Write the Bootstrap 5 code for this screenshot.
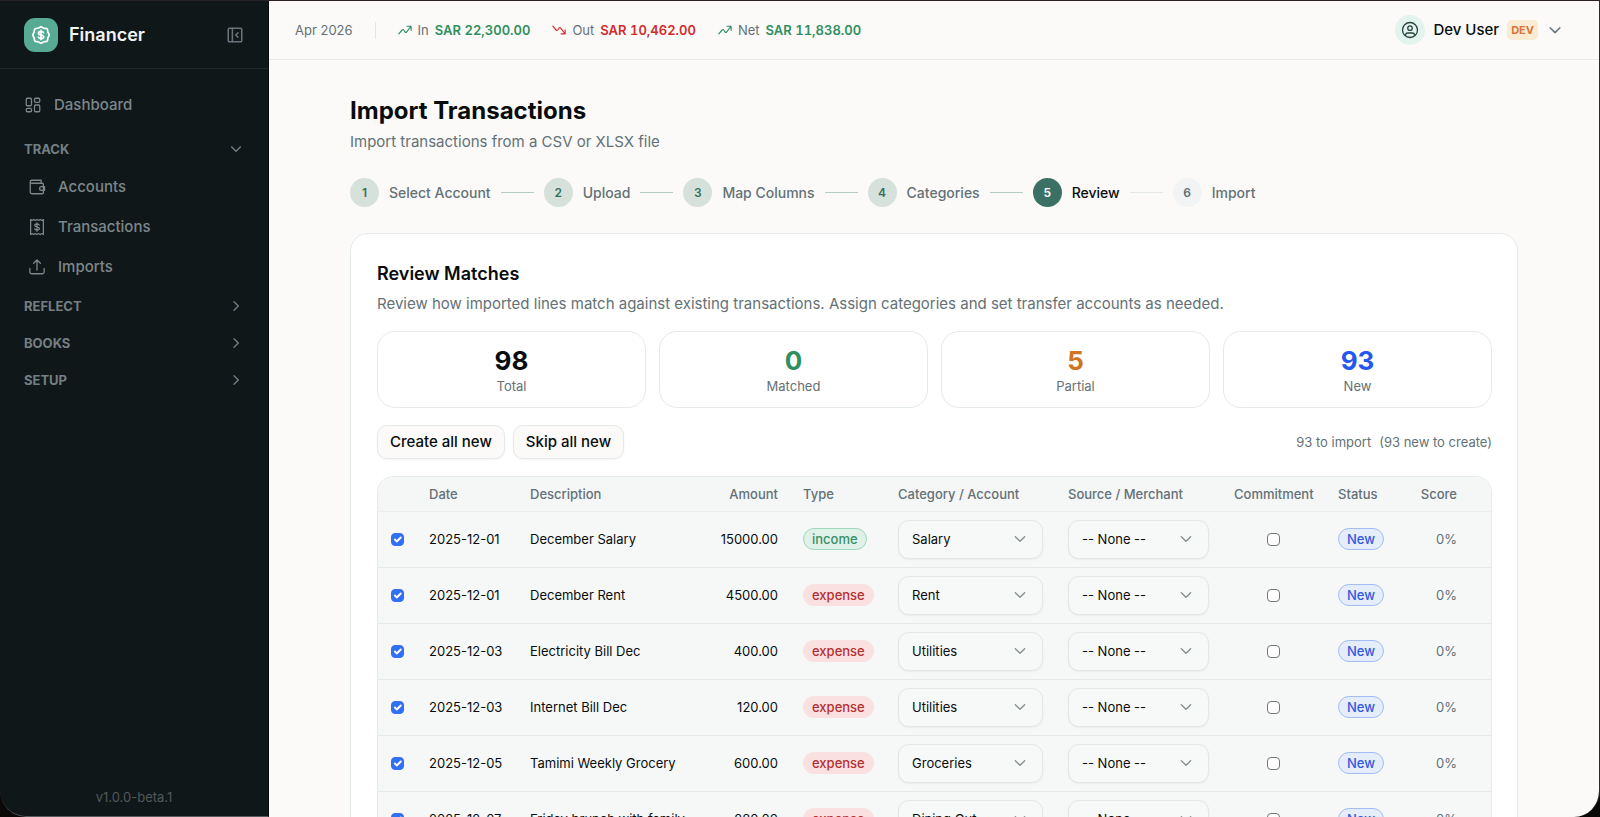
<!DOCTYPE html>
<html lang="en">
<head>
<meta charset="utf-8">
<meta name="viewport" content="width=device-width, initial-scale=1">
<title>Import Transactions - Financer</title>
<link href="https://cdn.jsdelivr.net/npm/bootstrap@5.3.0/dist/css/bootstrap.min.css" rel="stylesheet">
<style>
  :root { --muted: #647176; --line: #e4e9e9; --ink: #090c0d; --paper: #fbfaf8; --side: #101718; }
  body { font-family: Inter, "Liberation Sans", sans-serif; font-size: 15px; line-height: 20px; color: var(--ink); background: #0b0808; }
  svg { fill: none; stroke: currentColor; stroke-width: 2; stroke-linecap: round; stroke-linejoin: round; flex: none; }
  a { color: inherit; text-decoration: none; }
  .i14 { width: 14px; height: 14px; }
  .i16 { width: 16px; height: 16px; }
  .i18 { width: 18px; height: 18px; }
  .i20 { width: 20px; height: 20px; }
  .muted { color: var(--muted); }
  .green { color: #2f8f60; }
  .red { color: #d32a2c; }
  .orange { color: #cf7420; }
  .blue { color: #2558ee; }
  .t13 { font-size: 13px; }

  .shell { border-top: 1px solid #2a2224; border-right: 1px solid #2b2b2b; border-radius: 0 0 26px 26px; overflow: hidden; }
  .sidebar { width: 269px; background: var(--side); color: #7c878b; border: 1px solid #090d0e; border-width: 0 1px 1px 0; border-bottom-color: #565b5d; border-bottom-left-radius: 26px; }
  .brand-row { height: 68px; gap: 11px; padding: 0 24px; border-bottom: 1px solid #22292b; }
  .logo { width: 34px; height: 34px; border-radius: 11px; background: #57ab95; color: #fff; }
  .brand-name { font-size: 18px; color: #f1f4f4; }
  .side-link { height: 40px; padding: 0 24px; font-weight: 500; }
  .sub-link { padding-left: 28px; }
  .side-link svg { stroke-width: 1.7; }
  .side-group { height: 37px; padding: 0 24px; font-size: 13px; font-weight: 700; color: #747f84; background: none; border: 0; }
  .first-group { margin-top: 5px; }
  .icon-btn { background: none; border: 0; padding: 0; color: #69757a; }
  .version { color: #50595c; padding-bottom: 9px; }

  .main-col { background: var(--paper); min-width: 0; }
  .topbar { height: 59px; padding: 0 35px 0 26px; border-bottom: 1px solid #e8e9e8; }
  .vline { width: 1px; height: 17px; background: #e2e6e6; }
  .flow { gap: 22px; }
  .trend { gap: 6px; font-variant-numeric: tabular-nums; }
  .avatar { width: 30px; height: 30px; background: #e3f3ee; color: #24443d; }
  .avatar svg { stroke-width: 1.7; }
  .user-name { font-weight: 500; color: var(--ink); }
  .dev-tag { font-size: 11px; line-height: 20px; font-weight: 700; padding: 0 4px; border-radius: 5px; background: #faebd3; color: #d8763a; }

  .scroll-area { overflow: auto; scrollbar-width: none; }
  .scroll-area::-webkit-scrollbar { display: none; }
  .page { max-width: 1216px; padding: 34px 24px; margin: 0 auto; }
  h1 { font-size: 24px; line-height: 34px; font-weight: 700; margin: 0; }
  h2 { font-size: 18px; line-height: 28px; font-weight: 600; margin: 0; }
  .steps { gap: 10px; margin: 26px 0; font-size: 14px; font-weight: 500; }
  .step-pair { gap: 10px; }
  .step-dot { width: 29px; height: 29px; font-size: 12px; font-weight: 600; background: #d6e1dc; color: #35705f; }
  .step-line { width: 33px; height: 1px; background: #b3cbc3; }
  .now .step-dot { background: #3a7164; color: #fff; }
  .now { color: var(--ink); }
  .todo .step-dot { background: #f1f3f4; color: var(--muted); }
  .step-line.pale { background: #e4e8e8; }

  .panel { background: #fff; border: 1px solid var(--line); border-radius: 18px; padding: 26px 25px 26px 26px; }
  .lead-in { margin: 6px 0 0; }
  .stats { gap: 13px; margin: 17px 0; }
  .stat { border: 1px solid var(--line); border-radius: 18px; padding: 13px 0 12px; text-align: center; background: #fff; }
  .stat b { display: block; font-size: 26px; line-height: 32px; font-weight: 700; }
  .stat span { display: block; font-size: 13px; line-height: 18px; }
  .soft-btn { height: 34px; padding: 0 12px; font-size: 15px; line-height: 20px; font-weight: 500; background: #fbfaf9; border: 1px solid #e6e9ea; border-radius: 10px; box-shadow: 0 1px 2px rgba(0,0,0,.05); color: var(--ink); }

  .grid-box { margin-top: 17px; border: 1px solid var(--line); border-radius: 16px; overflow: hidden; }
  .grid { width: 100%; table-layout: fixed; font-size: 13px; line-height: 20px; background: #f5f8f7; margin: 0; }
  .grid th { height: 34px; padding: 0 12px 0 13px; font-weight: 500; color: var(--muted); background: #f5f6f6; border-bottom: 1px solid #eceeee; white-space: nowrap; }
  .grid td { height: 56px; padding: 0 12px 0 13px; border-bottom: 1px solid var(--line); white-space: nowrap; }
  .grid .score { padding-right: 34px; text-align: right; color: var(--muted); }
  .pill { display: inline-block; font-weight: 500; line-height: 20px; padding: 0 8px; border: 1px solid transparent; border-radius: 11px; }
  .pill-income { background: #e0f1e9; border-color: #9ed7bb; color: #3a9066; }
  .pill-expense { background: #fae0e0; color: #b5302f; }
  .pill-new { background: #e5ecfa; border-color: #a3bdf7; color: #3159e2; }
  .grid .form-select { height: 39px; font-size: 13px; line-height: 20px; padding: 0 36px 0 13px; border: 1px solid #e3e7e7; border-radius: 11px; background-color: #f7f9f8; color: var(--ink); box-shadow: 0 1px 2px rgba(0,0,0,.05); background-position: right 14px center; background-size: 16px 16px;
    background-image: url("data:image/svg+xml,%3Csvg xmlns='http://www.w3.org/2000/svg' viewBox='0 0 24 24' fill='none' stroke='%23848c8f' stroke-width='2' stroke-linecap='round' stroke-linejoin='round'%3E%3Cpath d='M5 8.500l7 7 7-7'/%3E%3C/svg%3E"); }
  .grid .form-check-input { width: 13px; height: 13px; margin: 0; border: 1px solid #767676; border-radius: 4px; display: block; }
  .grid .form-check-input:checked { background-color: #2f70f7; border-color: #2f70f7; background-size: 13px 13px; }
</style>
</head>
<body>
<svg width="0" height="0" class="position-absolute" aria-hidden="true">
  <symbol id="down" viewBox="0 0 24 24"><path d="M5.500 9l6.500 6.500L18.500 9"/></symbol>
  <symbol id="right" viewBox="0 0 24 24"><path d="M9 5.500l6.500 6.500L9 18.500"/></symbol>
  <symbol id="trend-up" viewBox="0 0 24 24"><path d="M1.500 18.500l5.500-6.500c1-1.200 1.800-1.200 2.700 0l2.600 3.500c.9 1.200 1.800 1.100 2.600-.2L22 6M15.500 5.500h7v7"/></symbol>
  <symbol id="trend-down" viewBox="0 0 24 24"><path d="M1.500 5.500L7 12c1 1.200 1.800 1.200 2.700 0l2.600-3.500c.9-1.200 1.800-1.100 2.600.2L22 18M15.500 18.500h7v-7"/></symbol>
</svg>

<div class="shell d-flex vh-100">
  <aside class="sidebar d-flex flex-column flex-shrink-0">
    <div class="brand-row d-flex align-items-center">
      <div class="logo d-flex align-items-center justify-content-center">
        <svg class="i20" viewBox="0 0 24 24"><path d="M12 2.200c1.500 0 2.200 1.300 3.600 1.700 1.300.3 2.700-.3 3.700.8s.5 2.400.9 3.700c.4 1.400 1.600 2.100 1.600 3.600s-1.200 2.200-1.600 3.600c-.4 1.300.1 2.700-.9 3.700s-2.400.5-3.700.8c-1.400.4-2.100 1.700-3.600 1.700s-2.200-1.300-3.600-1.700c-1.300-.3-2.700.2-3.700-.8s-.5-2.400-.9-3.700c-.4-1.400-1.600-2.100-1.600-3.600s1.200-2.200 1.600-3.600c.4-1.300-.1-2.700.9-3.700s2.400-.5 3.700-.8c1.400-.4 2.100-1.700 3.600-1.700z"/><path d="M15 9.300c-.3-1-1.500-1.600-3-1.600-1.700 0-3 .8-3 2.100 0 3.100 6.200 1.300 6.200 4.300 0 1.400-1.400 2.200-3.200 2.200-1.600 0-2.900-.7-3.200-1.800M12 6.300v11.400"/></svg>
      </div>
      <span class="brand-name fw-semibold me-auto">Financer</span>
      <button class="icon-btn d-flex" type="button" aria-label="Collapse sidebar">
        <svg class="i18" viewBox="0 0 24 24"><rect x="3" y="3" width="18" height="18" rx="1.500"/><path d="M8.500 3v18M16 9l-3 3 3 3"/></svg>
      </button>
    </div>
    <nav class="pt-3 flex-grow-1">
      <a href="#" class="side-link d-flex align-items-center"><svg class="i18 me-2" viewBox="0 0 24 24"><rect x="3" y="3" width="7" height="10" rx="1.500"/><rect x="14" y="3" width="7" height="5.500" rx="1.500"/><rect x="3" y="16.500" width="7" height="4.500" rx="1.500"/><rect x="14" y="12" width="7" height="9" rx="1.500"/></svg><span class="ps-1">Dashboard</span></a>
      <button type="button" class="side-group first-group w-100 d-flex align-items-center justify-content-between">TRACK<svg class="i16"><use href="#down"/></svg></button>
      <a href="#" class="side-link sub-link d-flex align-items-center"><svg class="i18 me-2" viewBox="0 0 24 24"><path d="M3 5v13.500A2.500 2.500 0 0 0 5.500 21H19a1.500 1.500 0 0 0 1.500-1.500v-11A1.500 1.500 0 0 0 19 7H5a2 2 0 0 1 0-4h12.500v4"/><path d="M22 11.500h-4a2.500 2.500 0 0 0 0 5h4z"/></svg><span class="ps-1">Accounts</span></a>
      <a href="#" class="side-link sub-link d-flex align-items-center"><svg class="i18 me-2" viewBox="0 0 24 24"><path d="M3.500 2l2.125 1.300L7.750 2l2.125 1.300L12 2l2.125 1.300L16.250 2l2.125 1.300L20.500 2v20l-2.125-1.300L16.250 22l-2.125-1.300L12 22l-2.125-1.300L7.750 22l-2.125-1.300L3.500 22z"/><path d="M15 9.500c-.3-.9-1.500-1.500-3-1.500-1.700 0-3 .7-3 2 0 2.900 6.200 1.200 6.200 4 0 1.300-1.400 2-3.200 2-1.600 0-2.900-.7-3.200-1.600M12 6.500v11"/></svg><span class="ps-1">Transactions</span></a>
      <a href="#" class="side-link sub-link d-flex align-items-center"><svg class="i18 me-2" viewBox="0 0 24 24"><path d="M12 16V3M7.500 7L12 2.500 16.500 7M2.500 14v4.500A2.500 2.500 0 0 0 5 21h14a2.500 2.500 0 0 0 2.500-2.500V14"/></svg><span class="ps-1">Imports</span></a>
      <button type="button" class="side-group w-100 d-flex align-items-center justify-content-between">REFLECT<svg class="i16"><use href="#right"/></svg></button>
      <button type="button" class="side-group w-100 d-flex align-items-center justify-content-between">BOOKS<svg class="i16"><use href="#right"/></svg></button>
      <button type="button" class="side-group w-100 d-flex align-items-center justify-content-between">SETUP<svg class="i16"><use href="#right"/></svg></button>
    </nav>
    <div class="version t13 text-center">v1.0.0-beta.1</div>
  </aside>

  <div class="main-col d-flex flex-column flex-grow-1">
    <header class="topbar d-flex align-items-center flex-shrink-0">
      <div class="flow d-flex align-items-center t13 muted">
        <span>Apr 2026</span>
        <span class="vline"></span>
        <span class="trend d-flex align-items-center"><svg class="i14 green"><use href="#trend-up"/></svg><span>In</span><span class="green fw-semibold">SAR 22,300.00</span></span>
        <span class="trend d-flex align-items-center"><svg class="i14 red"><use href="#trend-down"/></svg><span>Out</span><span class="red fw-semibold">SAR 10,462.00</span></span>
        <span class="trend d-flex align-items-center"><svg class="i14 green"><use href="#trend-up"/></svg><span>Net</span><span class="green fw-semibold">SAR 11,838.00</span></span>
      </div>
      <button type="button" class="icon-btn ms-auto d-flex align-items-center gap-2">
        <span class="avatar rounded-circle d-flex align-items-center justify-content-center"><svg class="i18" viewBox="0 0 24 24"><circle cx="12" cy="12" r="10"/><circle cx="12" cy="9.500" r="3"/><path d="M6 18.500c.3-2 1.200-2.500 3-2.500h6c1.800 0 2.700.5 3 2.500"/></svg></span>
        <span class="user-name">Dev User</span>
        <span class="dev-tag">DEV</span>
        <svg class="i18"><use href="#down"/></svg>
      </button>
    </header>

    <main class="scroll-area flex-grow-1">
      <div class="page">
        <h1>Import Transactions</h1>
        <p class="muted mb-0 mt-1">Import transactions from a CSV or XLSX file</p>

        <div class="steps d-flex align-items-center muted">
          <span class="step-dot rounded-circle d-flex align-items-center justify-content-center">1</span><span>Select Account</span><span class="step-line"></span>
          <span class="step-dot rounded-circle d-flex align-items-center justify-content-center">2</span><span>Upload</span><span class="step-line"></span>
          <span class="step-dot rounded-circle d-flex align-items-center justify-content-center">3</span><span>Map Columns</span><span class="step-line"></span>
          <span class="step-dot rounded-circle d-flex align-items-center justify-content-center">4</span><span>Categories</span><span class="step-line"></span>
          <span class="now step-pair d-flex align-items-center"><span class="step-dot rounded-circle d-flex align-items-center justify-content-center">5</span><span>Review</span></span><span class="step-line pale"></span>
          <span class="todo step-pair d-flex align-items-center"><span class="step-dot rounded-circle d-flex align-items-center justify-content-center">6</span><span>Import</span></span>
        </div>

        <section class="panel">
          <h2>Review Matches</h2>
          <p class="muted lead-in">Review how imported lines match against existing transactions. Assign categories and set transfer accounts as needed.</p>

          <div class="stats d-flex">
            <div class="stat flex-fill w-25"><b>98</b><span class="muted">Total</span></div>
            <div class="stat flex-fill w-25"><b class="green">0</b><span class="muted">Matched</span></div>
            <div class="stat flex-fill w-25"><b class="orange">5</b><span class="muted">Partial</span></div>
            <div class="stat flex-fill w-25"><b class="blue">93</b><span class="muted">New</span></div>
          </div>

          <div class="d-flex align-items-center gap-2">
            <button type="button" class="soft-btn">Create all new</button>
            <button type="button" class="soft-btn">Skip all new</button>
            <div class="ms-auto t13 muted d-flex gap-2"><span>93 to import</span><span>(93 new to create)</span></div>
          </div>

          <div class="grid-box">
            <table class="grid">
              <colgroup><col style="width:38px"><col style="width:101px"><col><col style="width:110px"><col style="width:95px"><col style="width:170px"><col style="width:166px"><col style="width:104px"><col style="width:76px"><col style="width:90px"></colgroup>
              <thead>
                <tr><th></th><th>Date</th><th>Description</th><th class="text-end">Amount</th><th>Type</th><th>Category / Account</th><th>Source / Merchant</th><th>Commitment</th><th>Status</th><th class="score">Score</th></tr>
              </thead>
              <tbody>
                <tr><td><input class="form-check-input" type="checkbox" checked aria-label="Import December Salary"></td><td>2025-12-01</td><td>December Salary</td><td class="text-end">15000.00</td><td><span class="pill pill-income">income</span></td><td><select class="form-select" aria-label="Category"><option>Salary</option></select></td><td><select class="form-select" aria-label="Source"><option>-- None --</option></select></td><td><input class="form-check-input mx-auto" type="checkbox" aria-label="Commitment"></td><td><span class="pill pill-new">New</span></td><td class="score">0%</td></tr>
                <tr><td><input class="form-check-input" type="checkbox" checked aria-label="Import December Rent"></td><td>2025-12-01</td><td>December Rent</td><td class="text-end">4500.00</td><td><span class="pill pill-expense">expense</span></td><td><select class="form-select" aria-label="Category"><option>Rent</option></select></td><td><select class="form-select" aria-label="Source"><option>-- None --</option></select></td><td><input class="form-check-input mx-auto" type="checkbox" aria-label="Commitment"></td><td><span class="pill pill-new">New</span></td><td class="score">0%</td></tr>
                <tr><td><input class="form-check-input" type="checkbox" checked aria-label="Import Electricity Bill Dec"></td><td>2025-12-03</td><td>Electricity Bill Dec</td><td class="text-end">400.00</td><td><span class="pill pill-expense">expense</span></td><td><select class="form-select" aria-label="Category"><option>Utilities</option></select></td><td><select class="form-select" aria-label="Source"><option>-- None --</option></select></td><td><input class="form-check-input mx-auto" type="checkbox" aria-label="Commitment"></td><td><span class="pill pill-new">New</span></td><td class="score">0%</td></tr>
                <tr><td><input class="form-check-input" type="checkbox" checked aria-label="Import Internet Bill Dec"></td><td>2025-12-03</td><td>Internet Bill Dec</td><td class="text-end">120.00</td><td><span class="pill pill-expense">expense</span></td><td><select class="form-select" aria-label="Category"><option>Utilities</option></select></td><td><select class="form-select" aria-label="Source"><option>-- None --</option></select></td><td><input class="form-check-input mx-auto" type="checkbox" aria-label="Commitment"></td><td><span class="pill pill-new">New</span></td><td class="score">0%</td></tr>
                <tr><td><input class="form-check-input" type="checkbox" checked aria-label="Import Tamimi Weekly Grocery"></td><td>2025-12-05</td><td>Tamimi Weekly Grocery</td><td class="text-end">600.00</td><td><span class="pill pill-expense">expense</span></td><td><select class="form-select" aria-label="Category"><option>Groceries</option></select></td><td><select class="form-select" aria-label="Source"><option>-- None --</option></select></td><td><input class="form-check-input mx-auto" type="checkbox" aria-label="Commitment"></td><td><span class="pill pill-new">New</span></td><td class="score">0%</td></tr>
                <tr><td><input class="form-check-input" type="checkbox" checked aria-label="Import Friday brunch with family"></td><td>2025-12-07</td><td>Friday brunch with family</td><td class="text-end">280.00</td><td><span class="pill pill-expense">expense</span></td><td><select class="form-select" aria-label="Category"><option>Dining Out</option></select></td><td><select class="form-select" aria-label="Source"><option>-- None --</option></select></td><td><input class="form-check-input mx-auto" type="checkbox" aria-label="Commitment"></td><td><span class="pill pill-new">New</span></td><td class="score">0%</td></tr>
              </tbody>
            </table>
          </div>
        </section>
      </div>
    </main>
  </div>
</div>
<script src="https://cdn.jsdelivr.net/npm/bootstrap@5.3.0/dist/js/bootstrap.bundle.min.js"></script>
</body>
</html>
